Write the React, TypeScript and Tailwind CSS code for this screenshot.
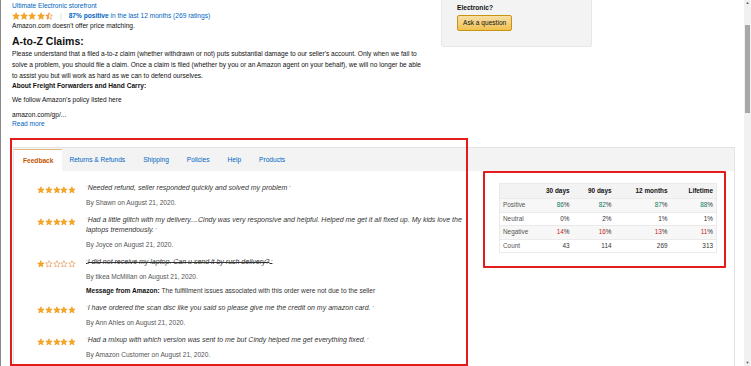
import React from 'react'

const font = { fontFamily: '"Liberation Sans", Arial, sans-serif' }

function Star({ fill = 'full', size = 8 }: { fill?: 'full' | 'half' | 'empty'; size?: number }) {
  const pts = '12,2 15,9 22,9.5 16.5,14 18.5,21.5 12,17.5 5.5,21.5 7.5,14 2,9.5 9,9'
  return (
    <svg width={size} height={size} viewBox="0 0 24 24">
      <defs>
        <linearGradient id="halfStar">
          <stop offset="50%" stopColor="#ffa41c" />
          <stop offset="50%" stopColor="#fff" />
        </linearGradient>
      </defs>
      <polygon
        points={pts}
        fill={fill === 'full' ? '#f7a51e' : fill === 'half' ? 'url(#halfStar)' : '#fff'}
        stroke={fill === 'full' ? '#e8940f' : '#de7921'}
        strokeWidth="1.5"
        strokeLinejoin="round"
      />
    </svg>
  )
}

function Stars({ n, half = false, size = 8 }: { n: number; half?: boolean; size?: number }) {
  const list = [0, 1, 2, 3, 4].map((i) => (i < n ? 'full' : i === n && half ? 'half' : 'empty'))
  return (
    <div className="flex">
      {list.map((f, i) => (
        <Star key={i} fill={f as any} size={size} />
      ))}
    </div>
  )
}

const reviews = [
  { stars: 5, text: 'Needed refund, seller responded quickly and solved my problem', by: 'Shawn' },
  {
    stars: 5,
    text: 'Had a little glitch with my delivery....Cindy was very responsive and helpful. Helped me get it all fixed up. My kids love the laptops tremendously.',
    by: 'Joyce',
  },
  { stars: 1, text: 'I did not receive my laptop. Can u send it by rush delivery?', by: 'tikea McMillan', strike: true },
  { stars: 5, text: 'I have ordered the scan disc like you said so please give me the credit on my amazon card.', by: 'Ann Ahles' },
  { stars: 5, text: 'Had a mixup with which version was sent to me but Cindy helped me get everything fixed.', by: 'Amazon Customer' },
]

const rows = [
  { label: 'Positive', vals: ['86', '82', '87', '88'], color: 'text-[#067d62]', bg: 'bg-[#f7f7f7]' },
  { label: 'Neutral', vals: ['0', '2', '1', '1'], color: '', bg: 'bg-white' },
  { label: 'Negative', vals: ['14', '16', '13', '11'], color: 'text-[#cc1c1c]', bg: 'bg-[#f7f7f7]' },
]

export default function App() {
  return (
    <div className="relative w-[751px] h-[366px] overflow-hidden bg-white flex text-[#111]" style={font}>
      <div className="w-[744px] h-full border-l border-[#8a8a8a]">
        {/* top area */}
        <div className="flex h-[147px]">
          <div className="w-[425px] pl-[11px] pt-[1px] text-[6.6px] leading-[10px]">
            <a href="#" className="text-[#0066c0] block">Ultimate Electronic storefront</a>
            <div className="flex items-center gap-[3px] text-[#0066c0] h-[10px]">
              <Stars n={4} half size={8.2} />
              <span className="text-[#ccc] mx-[4px]">|</span>
              <span><b>87% positive</b> in the last 12 months (269 ratings)</span>
            </div>
            <p>Amazon.com doesn't offer price matching.</p>
            <h2 className="text-[10.5px] font-bold mt-[4px] leading-[12px]">A-to-Z Claims:</h2>
            <p className="mt-[1px] leading-[11px]">
              Please understand that a filed a-to-z claim (whether withdrawn or not) puts substantial damage to our seller's account. Only when we fail to solve a problem, you should file a claim. Once a claim is filed (whether by you or an Amazon agent on your behalf), we will no longer be able to assist you but will work as hard as we can to defend ourselves.
            </p>
            <p className="font-bold">About Freight Forwarders and Hand Carry:</p>
            <p className="mt-[4px]">We follow Amazon's policy listed here</p>
            <p className="mt-[5px]">amazon.com/gp/...</p>
            <a href="#" className="text-[#0066c0] block -mt-[1px]">Read more</a>
          </div>
          <div className="ml-[15px] w-[151px] h-[47px] bg-[#f3f3f3] border border-t-0 border-[#e7e7e7] rounded-b-[3px] pl-[15px] pt-[3px] text-[6.6px]">
            <p className="font-bold leading-[10px]">Electronic?</p>
            <button className="mt-[2px] h-[16px] px-[5px] rounded-[2px] border border-[#c89411] bg-gradient-to-b from-[#f7dfa5] to-[#f0c14b] text-[6.6px] text-[#111]">
              Ask a question
            </button>
          </div>
        </div>

        {/* seller tabs */}
        <div className="ml-[12px] mr-[9px] border border-[#e3e3e3] text-[6.6px]">
          <div className="flex h-[23px] bg-[#f3f3f3] items-end">
            <div className="h-[22px] px-[9px] flex items-center bg-white border-t-[1.5px] border-[#e3b97a] text-[#c45500] font-bold">Feedback</div>
            <div className="flex items-center h-[22px] gap-[18px] pl-[7px] text-[#0066c0]">
              <span>Returns &amp; Refunds</span>
              <span>Shipping</span>
              <span>Policies</span>
              <span>Help</span>
              <span>Products</span>
            </div>
          </div>
          <div className="flex h-[200px] bg-white">
            <div className="w-[450px] pl-[23px] pt-[12px] text-[6.6px] leading-[10px]">
              {reviews.map((r, i) => (
                <div key={i} className="flex mb-[7px]">
                  <div className="w-[49px] pt-[3px]">
                    <Stars n={r.stars} size={7.8} />
                  </div>
                  <div className="flex-1">
                    <p className={`italic text-[7px] text-[#333] ${r.strike ? 'line-through' : ''}`}>
                      <span className="text-[#999] text-[5px]">“</span>
                      {r.text}
                      <span className="text-[#999] text-[5px]"> ”</span>
                    </p>
                    <p className="text-[#555] mt-[5px]">By {r.by} on August 21, 2020.</p>
                    {r.strike && (
                      <p className="mt-[4px] text-[#333]">
                        <b className="text-[#111]">Message from Amazon:</b> The fulfillment issues associated with this order were not due to the seller
                      </p>
                    )}
                  </div>
                </div>
              ))}
            </div>
            <div className="flex-1 pt-[12px] pl-[35px]">
              <table className="w-[217px] table-fixed border border-[#eaeaea] text-[6.4px] text-[#333] border-collapse">
                <thead>
                  <tr className="bg-[#f3f3f3] h-[15px] text-[#111]">
                    <th className="w-[44px]"></th>
                    <th className="w-[28px] text-right font-bold pr-[2px]">30 days</th>
                    <th className="w-[42px] text-right font-bold pr-[2px]">90 days</th>
                    <th className="w-[56px] text-right font-bold pr-[2px]">12 months</th>
                    <th className="w-[47px] text-right font-bold pr-[3px]">Lifetime</th>
                  </tr>
                </thead>
                <tbody>
                  {rows.map((r) => (
                    <tr key={r.label} className={`${r.bg} h-[13.5px] border-t border-[#eaeaea]`}>
                      <td className="pl-[3px] text-[#555]">{r.label}</td>
                      {r.vals.map((v, i) => (
                        <td key={i} className={`text-right ${i === 3 ? 'pr-[3px]' : 'pr-[2px]'}`}>
                          <span className={r.color}>{v}</span>%
                        </td>
                      ))}
                    </tr>
                  ))}
                  <tr className="bg-white h-[13.5px] border-t border-[#eaeaea]">
                    <td className="pl-[3px] text-[#555]">Count</td>
                    <td className="text-right pr-[2px]">43</td>
                    <td className="text-right pr-[2px]">114</td>
                    <td className="text-right pr-[2px]">269</td>
                    <td className="text-right pr-[3px]">313</td>
                  </tr>
                </tbody>
              </table>
            </div>
          </div>
        </div>
      </div>

      {/* scrollbar */}
      <div className="w-[7px] h-full bg-[#f1f1f1] flex flex-col items-center">
        <div className="text-[4px] leading-[6px] text-[#555]">▲</div>
        <div className="mt-[19px] w-[5px] h-[88px] bg-[#a8a8a8]" />
        <div className="mt-auto text-[4px] leading-[6px] text-[#555]">▼</div>
      </div>

      {/* red highlight annotations */}
      <div className="absolute left-[10px] top-[138px] w-[458px] h-[228px] border-2 border-[#e21b1b]" />
      <div className="absolute left-[483px] top-[171px] w-[243px] h-[97px] border-2 border-[#e21b1b] rounded-[1px]" />
    </div>
  )
}
